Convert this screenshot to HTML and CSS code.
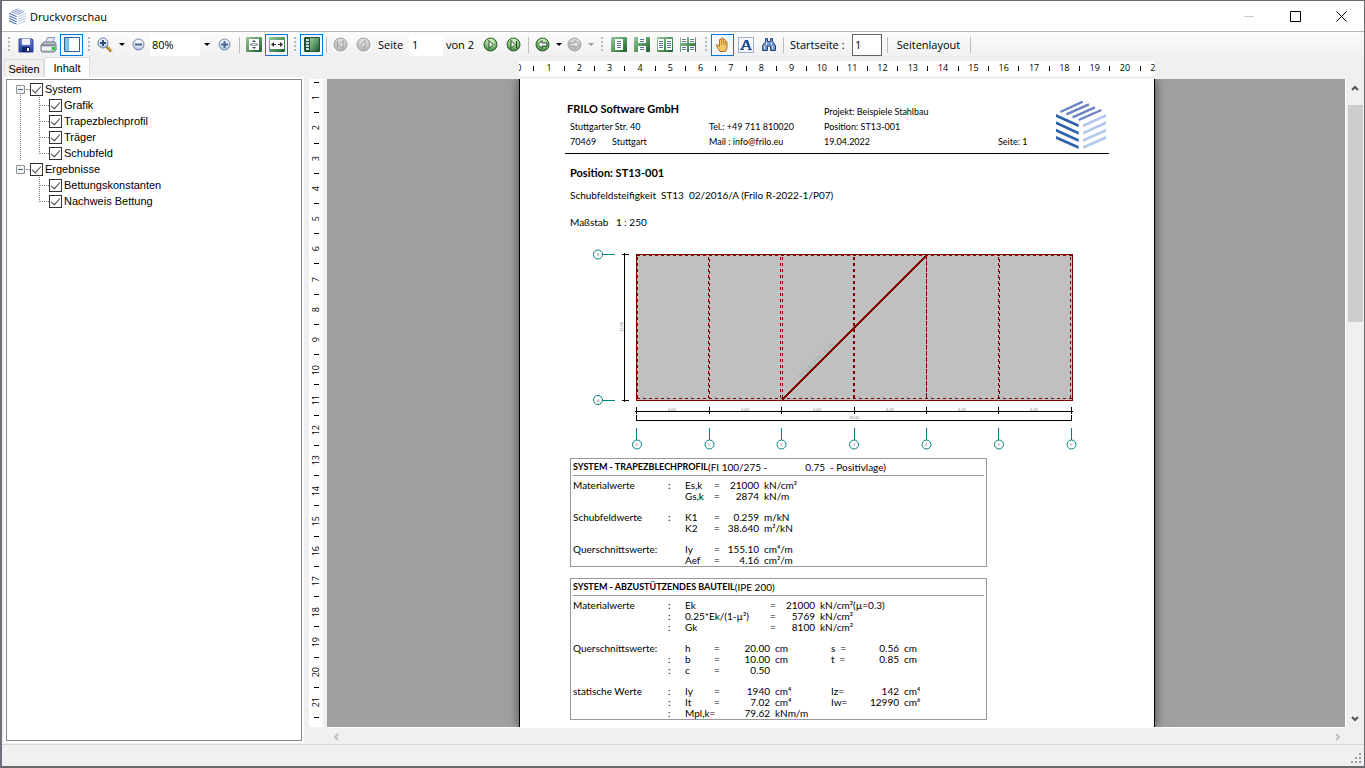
FILE: index.html
```html
<!DOCTYPE html>
<html lang="de">
<head>
  <meta charset="utf-8">
  <title>Druckvorschau</title>
  <link rel="stylesheet" href="styles.css">
</head>
<body>
  <!-- Shared gradients and symbols -->
  <svg class="defs" width="0" height="0" aria-hidden="true">
    <defs>
      <linearGradient id="green" x1="0" y1="0" x2="1" y2="1">
        <stop offset="0" stop-color="#9cc79a"/><stop offset="0.5" stop-color="#5a9a62"/><stop offset="1" stop-color="#1f5a30"/>
      </linearGradient>
      <radialGradient id="greenBall" cx="0.5" cy="0.25" r="0.8">
        <stop offset="0" stop-color="#e4f5d8"/><stop offset="0.5" stop-color="#8cc97c"/><stop offset="1" stop-color="#2f7a3a"/>
      </radialGradient>
      <radialGradient id="greyBall" cx="0.5" cy="0.25" r="0.8">
        <stop offset="0" stop-color="#e6e6e6"/><stop offset="1" stop-color="#b0b0b0"/>
      </radialGradient>
      <radialGradient id="blueBall" cx="0.5" cy="0.3" r="0.8">
        <stop offset="0" stop-color="#ffffff"/><stop offset="0.6" stop-color="#cfdcec"/><stop offset="1" stop-color="#7f9cc0"/>
      </radialGradient>
      <linearGradient id="blueFill" x1="0" y1="0" x2="0" y2="1">
        <stop offset="0" stop-color="#6f86dd"/><stop offset="1" stop-color="#22389c"/>
      </linearGradient>
      <symbol id="cube" viewBox="0 0 150 144">
        <g stroke="#6a82c4" stroke-width="7"><path d="M13 33 80 2M31 40l68-30M50 49l67-30M68 57l68-30"/></g>
        <path fill="#2e62ac" d="M0 39l68 31v9L0 48zM0 61l68 31v9L0 70zM0 83l68 31v9L0 92zM0 105l68 30v9L0 114z"/>
        <path fill="#b2c8ec" d="M81 70l69-31v9L81 79zM81 92l69-31v9l-69 31zM81 114l69-31v9l-69 31zM81 135l69-30v9l-69 30z"/>
      </symbol>
    </defs>
  </svg>

  <div class="window">
    <header class="titlebar">
      <svg class="app-icon" viewBox="0 0 150 144"><use href="#cube"/></svg>
      <h1>Druckvorschau</h1>
      <div class="window-buttons">
        <button aria-label="Minimieren"><svg width="11" height="11"><path d="M0 5.500h10" stroke="#c8c8c8"/></svg></button>
        <button aria-label="Maximieren"><svg width="11" height="11"><path d="M.5.5h10v10H.5z" fill="none" stroke="#000"/></svg></button>
        <button aria-label="Schließen"><svg width="11" height="11"><path d="M.5.5l10 10M10.500.5l-10 10" stroke="#000"/></svg></button>
      </div>
    </header>

    <!-- Toolbar -->
    <nav class="toolbar">
      <span class="grip"></span>
      <button class="tool" aria-label="Speichern"><svg width="16" height="16"><path d="M1 2h13l1 1v12H1z" fill="url(#blueFill)" stroke="#33439c"/><path d="M4 2h8v6H4z" fill="#eef1fb"/><path d="M4 10h8v5H4z" fill="#16235e"/><path d="M9 11h2v3H9z" fill="#fff"/></svg></button>
      <button class="tool" aria-label="Drucken"><svg width="17" height="16"><path d="M5.500 6l2-5.500h7L13 6z" fill="#dfe8f7" stroke="#7f93ad"/><path d="M1 8l3-3h11l1 2v6l-2 2H2l-1-1z" fill="#c3c9d1" stroke="#6e7681"/><path d="M2 8h13" stroke="#4e545c"/><path d="M2 10h9v3H2z" fill="#f2f4f6"/><path d="M12 10h3v3h-3z" fill="#18d630"/></svg></button>
      <button class="tool on" aria-label="Navigationsbereich"><svg width="16" height="15"><path d="M.5.5h15v14H.5z" fill="#fff" stroke="#315f8e"/><path d="M1 1h4v13H1z" fill="#7cc0e6"/><path d="M5.500 1v13" stroke="#e9f4fb"/></svg></button>
      <span class="grip narrow"></span>
      <button class="tool" aria-label="Zoom"><svg width="16" height="16"><path d="M9.500 9.500l5 5" stroke="#a97924" stroke-width="3"/><path d="M10 9l5 5" stroke="#f0c66b"/><circle cx="6" cy="6" r="5" fill="url(#blueBall)" stroke="#6b83ab"/><path d="M3 6h6M6 3v6" stroke="#2c4c83" stroke-width="2"/></svg></button>
      <button class="arrow" aria-label="Zoomstufen"><svg width="6" height="3"><path d="M0 0h6L3 3z"/></svg></button>
      <button class="tool" aria-label="Verkleinern"><svg width="13" height="13"><circle cx="6.500" cy="6.500" r="5.500" fill="url(#blueBall)" stroke="#7489aa"/><path d="M3 6.500h7" stroke="#4a6596" stroke-width="2"/></svg></button>
      <select class="zoom" aria-label="Zoomfaktor"><option>80%</option></select>
      <button class="arrow" aria-label="Auswahl öffnen"><svg width="6" height="3"><path d="M0 0h6L3 3z"/></svg></button>
      <button class="tool" aria-label="Vergrößern"><svg width="13" height="13"><circle cx="6.500" cy="6.500" r="5.500" fill="url(#blueBall)" stroke="#7489aa"/><path d="M3 6.500h7M6.500 3v7" stroke="#4a6596" stroke-width="2"/></svg></button>
      <span class="sep"></span>
      <button class="tool" aria-label="Ganze Seite"><svg width="16" height="16"><rect width="16" height="15" rx="1" fill="url(#green)"/><path d="M3 2h10v11H3z" fill="#fff"/><path d="M6 5L8 3l2 2zM6 10l2 2 2-2zM5.500 6v3L4 7.500zM10.500 6v3L12 7.500z" fill="#3c4653"/><path d="M6 6.500h4v2H6z" fill="none" stroke="#98a3ae"/></svg></button>
      <button class="tool on" aria-label="Seitenbreite"><svg width="16" height="16"><rect width="16" height="15" rx="1" fill="url(#green)"/><path d="M1 3h14v9H1z" fill="#fff"/><path d="M2 7.500L5 5v2h2v1H5v2zM14 7.500L11 5v2H9v1h2v2z" fill="#27313b"/></svg></button>
      <span class="grip"></span>
      <button class="tool on" aria-label="Miniaturen"><svg width="16" height="16"><rect width="16" height="15" rx="1" fill="#244f32"/><path d="M6 1h9v13H6z" fill="url(#green)"/><path d="M2 2h3v2H2zM2 5h3v2H2zM2 8h3v2H2zM2 11h3v2H2z" fill="#c9dcea"/></svg></button>
      <span class="sep"></span>
      <button class="tool" aria-label="Erste Seite" disabled><svg width="15" height="15"><circle cx="7.500" cy="7.500" r="6.500" fill="url(#greyBall)" stroke="#a4a4a4"/><path d="M4.500 4v7M10 3.500v8l-4-4z" fill="#e8e8e8" stroke="#989898"/></svg></button>
      <button class="tool" aria-label="Vorige Seite" disabled><svg width="15" height="15"><circle cx="7.500" cy="7.500" r="6.500" fill="url(#greyBall)" stroke="#a4a4a4"/><path d="M9 3.500v8l-4-4z" fill="#e8e8e8" stroke="#989898"/></svg></button>
      <label class="caption" for="page">Seite</label>
      <input class="page-input" id="page" type="text" value="1">
      <span class="caption total">von 2</span>
      <button class="tool" aria-label="Nächste Seite"><svg width="15" height="15"><circle cx="7.500" cy="7.500" r="6.500" fill="url(#greenBall)" stroke="#2c5b2f"/><path d="M6 3.500v8l4-4z" fill="#fff" stroke="#1d4522"/></svg></button>
      <button class="tool" aria-label="Letzte Seite"><svg width="15" height="15"><circle cx="7.500" cy="7.500" r="6.500" fill="url(#greenBall)" stroke="#2c5b2f"/><path d="M10.500 4v7M5 3.500v8l4-4z" fill="#fff" stroke="#1d4522"/></svg></button>
      <span class="sep"></span>
      <button class="tool" aria-label="Zurück"><svg width="15" height="15"><circle cx="7.500" cy="7.500" r="6.500" fill="url(#greenBall)" stroke="#2c5b2f"/><path d="M3 7.500l4-4V6h5v3H7v2.500z" fill="#fff" stroke="#1d4522"/></svg></button>
      <button class="arrow small" aria-label="Verlauf zurück"><svg width="6" height="3"><path d="M0 0h6L3 3z"/></svg></button>
      <button class="tool" aria-label="Vorwärts" disabled><svg width="15" height="15"><circle cx="7.500" cy="7.500" r="6.500" fill="url(#greyBall)" stroke="#a4a4a4"/><path d="M12 7.500l-4-4V6H3v3h5v2.500z" fill="#e8e8e8" stroke="#989898"/></svg></button>
      <button class="arrow small" aria-label="Verlauf vorwärts" disabled><svg width="6" height="3"><path d="M0 0h6L3 3z" fill="#999"/></svg></button>
      <span class="grip"></span>
      <button class="tool" aria-label="Einzelseite"><svg width="16" height="16"><rect width="16" height="15" rx="1" fill="url(#green)"/><path d="M4 2h8v11H4z" fill="#fff"/><path d="M6 4.500h4M6 6.500h4M6 8.500h4M6 10.500h4" stroke="#5a73a5"/></svg></button>
      <button class="tool" aria-label="Fortlaufend"><svg width="16" height="16"><rect width="16" height="15" rx="1" fill="url(#green)"/><path d="M4 0h8v6H4zM4 9h8v6H4z" fill="#fff"/><path d="M6 2.500h4M6 4.500h4M6 10.500h4M6 12.500h4" stroke="#5a73a5"/></svg></button>
      <button class="tool" aria-label="Doppelseite"><svg width="16" height="16"><rect width="16" height="15" rx="1" fill="url(#green)"/><path d="M1 2h6v11H1zM9 2h6v11H9z" fill="#fff"/><path d="M2 4.500h4M2 6.500h4M2 8.500h4M2 10.500h4M10 4.500h4M10 6.500h4M10 8.500h4M10 10.500h4" stroke="#5a73a5"/></svg></button>
      <button class="tool" aria-label="Doppelseite fortlaufend"><svg width="16" height="16"><rect width="16" height="15" rx="1" fill="url(#green)"/><path d="M1 0h6v6H1zM9 0h6v6H9zM1 9h6v6H1zM9 9h6v6H9z" fill="#fff"/><path d="M2 2.500h4M2 4.500h4M10 2.500h4M10 4.500h4M2 10.500h4M2 12.500h4M10 10.500h4M10 12.500h4" stroke="#5a73a5"/></svg></button>
      <span class="grip"></span>
      <button class="tool on" aria-label="Hand"><svg width="15" height="16"><path d="M5 14.500L1.500 9c-.8-1.500.8-2 1.500-1l1.500 1.500V3c0-1.200 1.500-1.200 1.700 0L6.500 2c0-1.400 1.800-1.400 2 0v1c.2-1 1.800-.8 1.800.3V5c.3-.9 1.700-.8 1.700.4V11l-1.500 3.500z" fill="#f6c768" stroke="#a8702a"/><path d="M6.500 3v5M8.500 3v5M10.500 4v4" stroke="#c68d3b"/></svg></button>
      <button class="tool" aria-label="Textauswahl"><svg width="16" height="16"><path d="M.5.5h15v15H.5z" fill="none" stroke="#4d6b9c" stroke-dasharray="1 1"/><path d="M7 3h3l3 9h1v1h-4v-1h1l-1-2H6l-1 2h1v1H2v-1h1zM7.500 5L6.500 9h3z" fill="#1f4c96"/></svg></button>
      <button class="tool" aria-label="Suchen"><svg width="16" height="15"><path d="M4.500 1.500h2v3h3v-3h2v3l3 4v5h-5V9h-3v4.500h-5v-5l3-4z" fill="#6f95d3" stroke="#22457f"/><path d="M3.500 9v3M11.500 9v3M5.500 5v3M10.500 5v3" stroke="#d3e2f8"/></svg></button>
      <span class="sep"></span>
      <label class="caption start" for="startPage">Startseite :</label>
      <input class="start-input" id="startPage" type="text" value="1">
      <span class="sep"></span>
      <button class="text-button">Seitenlayout</button>
      <span class="sep"></span>
    </nav>

    <main class="workspace">
      <!-- Sidebar with outline tree -->
      <aside class="sidebar">
        <div class="tabs">
          <button class="tab">Seiten</button>
          <button class="tab active">Inhalt</button>
        </div>
        <ul class="tree">
          <li class="branch">
            <div class="node"><button class="expander" aria-label="Zuklappen"></button><input type="checkbox" id="n1" checked><label for="n1">System</label></div>
            <ul>
              <li class="node"><input type="checkbox" id="n2" checked><label for="n2">Grafik</label></li>
              <li class="node"><input type="checkbox" id="n3" checked><label for="n3">Trapezblechprofil</label></li>
              <li class="node"><input type="checkbox" id="n4" checked><label for="n4">Träger</label></li>
              <li class="node"><input type="checkbox" id="n5" checked><label for="n5">Schubfeld</label></li>
            </ul>
          </li>
          <li class="branch">
            <div class="node"><button class="expander" aria-label="Zuklappen"></button><input type="checkbox" id="n6" checked><label for="n6">Ergebnisse</label></div>
            <ul>
              <li class="node"><input type="checkbox" id="n7" checked><label for="n7">Bettungskonstanten</label></li>
              <li class="node"><input type="checkbox" id="n8" checked><label for="n8">Nachweis Bettung</label></li>
            </ul>
          </li>
        </ul>
      </aside>

      <section class="viewer">
        <div class="ruler-x">
          <ol>
            <li>0</li><li>1</li><li>2</li><li>3</li><li>4</li><li>5</li><li>6</li><li>7</li><li>8</li><li>9</li><li>10</li>
            <li>11</li><li>12</li><li>13</li><li>14</li><li>15</li><li>16</li><li>17</li><li>18</li><li>19</li><li>20</li><li>21</li>
          </ol>
        </div>
        <div class="ruler-y">
          <ol>
            <li><span>1</span></li><li><span>2</span></li><li><span>3</span></li><li><span>4</span></li><li><span>5</span></li><li><span>6</span></li><li><span>7</span></li>
            <li><span>8</span></li><li><span>9</span></li><li><span>10</span></li><li><span>11</span></li><li><span>12</span></li><li><span>13</span></li><li><span>14</span></li>
            <li><span>15</span></li><li><span>16</span></li><li><span>17</span></li><li><span>18</span></li><li><span>19</span></li><li><span>20</span></li><li><span>21</span></li><li></li>
          </ol>
        </div>

        <div class="canvas">
          <article class="sheet">
            <header class="letterhead">
              <div class="company">
                <h2>FRILO Software GmbH</h2>
                <p>Stuttgarter Str. 40</p>
                <p><span class="zip">70469</span>Stuttgart</p>
              </div>
              <div>
                <p>Tel.: +49 711 810020</p>
                <p>Mail : info@frilo.eu</p>
              </div>
              <div>
                <p>Projekt: Beispiele Stahlbau</p>
                <p>Position: ST13-001</p>
                <p>19.04.2022</p>
              </div>
              <div>
                <p>Seite: 1</p>
              </div>
              <svg class="logo" viewBox="0 0 150 144"><use href="#cube"/></svg>
            </header>

            <div class="intro">
              <h2>Position: ST13-001</h2>
              <p>Schubfeldsteifigkeit&ensp;ST13&ensp;02/2016/A (Frilo R-2022-1/P07)</p>
              <p>Maßstab&ensp; 1 : 250</p>
            </div>

            <!-- Plan view of the shear field -->
            <svg class="plan" width="490" height="208" viewBox="590 246 490 208" shape-rendering="crispEdges" fill="none">
              <path d="M636 254h436v146H636z" fill="#c0c0c0"/>
              <g stroke="#800000">
                <path d="M636.500 254.500h435.500v146H636.500z"/>
                <path stroke-dasharray="3 3" d="M637 255.500h435M637 398.500h435M637.500 257v142M708.500 257v142M709.500 259v140M780.500 257v142M782.500 257v142M998.500 257v142M999.500 259v140M1070.500 257v142"/>
                <path stroke-dasharray="3 3" stroke-width="2" d="M854 257v142"/>
                <path stroke-dasharray="5 1" d="M926.500 255v144"/>
                <path stroke-width="2" d="M782 400l145-145"/>
              </g>
              <g stroke="#000">
                <path d="M624.500 253v149M622 254.500h7M622 400.500h7"/>
                <path d="M635 411.500h438M636.500 407v7M709.500 407v7M781.500 407v7M854.500 407v7M926.500 407v7M998.500 407v7M1071.500 407v7"/>
                <path d="M636 420.500h436M636.500 415v6M1071.500 415v6"/>
              </g>
              <g stroke="#008080" shape-rendering="auto">
                <path d="M602 254.500h13M602 400.500h13M636.500 428v12M709.500 428v12M781.500 428v12M854.500 428v12M926.500 428v12M998.500 428v12M1071.500 428v12"/>
                <circle cx="598" cy="254.500" r="4.500"/><circle cx="598" cy="400" r="4.500"/>
                <circle cx="637" cy="444.500" r="4.500"/><circle cx="709.500" cy="444.500" r="4.500"/><circle cx="781.500" cy="444.500" r="4.500"/><circle cx="854" cy="444.500" r="4.500"/>
                <circle cx="926.500" cy="444.500" r="4.500"/><circle cx="999" cy="444.500" r="4.500"/><circle cx="1071.500" cy="444.500" r="4.500"/>
              </g>
              <g class="plan-text">
                <text x="672" y="411">6.00</text><text x="745" y="411">6.00</text><text x="817" y="411">6.00</text><text x="890" y="411">6.00</text><text x="962" y="411">6.00</text><text x="1034" y="411">6.00</text>
                <text x="854" y="419">36.00</text>
                <text transform="translate(623 327) rotate(-90)">12.00</text>
                <text class="profile" transform="translate(818 362) rotate(-45)">FI 100/275 - 0.75</text>
                <text x="598" y="256">B</text><text x="598" y="402">A</text>
                <text x="637" y="446">0</text><text x="709" y="446">1</text><text x="781" y="446">2</text><text x="854" y="446">3</text><text x="926" y="446">4</text><text x="999" y="446">5</text><text x="1071" y="446">6</text>
              </g>
            </svg>

            <section class="block">
              <h3>SYSTEM - TRAPEZBLECHPROFIL<span>(FI 100/275 -</span><span class="thickness">0.75&ensp;- Positivlage)</span></h3>
              <table class="values">
                <colgroup><col class="c-name"><col class="c-colon"><col class="c-sym"><col class="c-eq"><col class="c-num"><col></colgroup>
                <tbody>
                  <tr><td>Materialwerte</td><td>:</td><td>Es,k</td><td>=</td><td class="num">21000</td><td>kN/cm²</td></tr>
                  <tr><td></td><td></td><td>Gs,k</td><td>=</td><td class="num">2874</td><td>kN/m</td></tr>
                </tbody>
                <tbody>
                  <tr><td>Schubfeldwerte</td><td>:</td><td>K1</td><td>=</td><td class="num">0.259</td><td>m/kN</td></tr>
                  <tr><td></td><td></td><td>K2</td><td>=</td><td class="num">38.640</td><td>m²/kN</td></tr>
                </tbody>
                <tbody>
                  <tr><td colspan="2">Querschnittswerte:</td><td>Iy</td><td>=</td><td class="num">155.10</td><td>cm⁴/m</td></tr>
                  <tr><td></td><td></td><td>Aef</td><td>=</td><td class="num">4.16</td><td>cm²/m</td></tr>
                </tbody>
              </table>
            </section>

            <section class="block">
              <h3>SYSTEM - ABZUSTÜTZENDES BAUTEIL<span>(IPE 200)</span></h3>
              <table class="values">
                <colgroup><col class="c-name"><col class="c-colon"><col class="c-formula"><col class="c-eq"><col class="c-num"><col></colgroup>
                <tbody>
                  <tr><td>Materialwerte</td><td>:</td><td>Ek</td><td>=</td><td class="num">21000</td><td>kN/cm²(µ=0.3)</td></tr>
                  <tr><td></td><td>:</td><td>0.25*Ek/(1-µ²)</td><td>=</td><td class="num">5769</td><td>kN/cm²</td></tr>
                  <tr><td></td><td>:</td><td>Gk</td><td>=</td><td class="num">8100</td><td>kN/cm²</td></tr>
                </tbody>
              </table>
              <table class="values">
                <colgroup><col class="c-name"><col class="c-colon"><col class="c-sym"><col class="c-eq"><col class="c-wide"><col class="c-unit"><col class="c-sym"><col class="c-last"><col></colgroup>
                <tbody>
                  <tr><td colspan="2">Querschnittswerte:</td><td>h</td><td>=</td><td class="num">20.00</td><td>cm</td><td>s&ensp;=</td><td class="num">0.56</td><td>cm</td></tr>
                  <tr><td></td><td>:</td><td>b</td><td>=</td><td class="num">10.00</td><td>cm</td><td>t&ensp;=</td><td class="num">0.85</td><td>cm</td></tr>
                  <tr><td></td><td>:</td><td>c</td><td>=</td><td class="num">0.50</td></tr>
                </tbody>
                <tbody>
                  <tr><td>statische Werte</td><td>:</td><td>Iy</td><td>=</td><td class="num">1940</td><td>cm⁴</td><td>Iz=</td><td class="num">142</td><td>cm⁴</td></tr>
                  <tr><td></td><td>:</td><td>It</td><td>=</td><td class="num">7.02</td><td>cm⁴</td><td>Iw=</td><td class="num">12990</td><td>cm⁶</td></tr>
                  <tr><td></td><td>:</td><td colspan="2">Mpl,k=</td><td class="num">79.62</td><td>kNm/m</td></tr>
                </tbody>
              </table>
            </section>
          </article>
        </div>

        <div class="scroll-y">
          <button aria-label="Nach oben"><svg width="8" height="6"><path d="M1 5l3-3 3 3" fill="none" stroke="#555" stroke-width="2"/></svg></button>
          <div class="thumb"></div>
          <button aria-label="Nach unten"><svg width="8" height="6"><path d="M1 1l3 3 3-3" fill="none" stroke="#555" stroke-width="2"/></svg></button>
        </div>
        <div class="scroll-x">
          <button aria-label="Nach links"><svg width="6" height="8"><path d="M5 1L2 4l3 3" fill="none" stroke="#bfbfbf" stroke-width="2"/></svg></button>
          <button aria-label="Nach rechts"><svg width="6" height="8"><path d="M1 1l3 3-3 3" fill="none" stroke="#bfbfbf" stroke-width="2"/></svg></button>
        </div>
      </section>
    </main>

    <footer class="statusbar">
      <svg width="10" height="10" fill="#9a9a9a"><path d="M8 0h2v2H8zM8 4h2v2H8zM8 8h2v2H8zM4 4h2v2H4zM4 8h2v2H4zM0 8h2v2H0z"/></svg>
    </footer>
  </div>
</body>
</html>
```
FILE: styles.css
```css
* {
  box-sizing: border-box;
}

body {
  margin: 0;
  font-family: "Open Sans", "Noto Sans", sans-serif;
  font-size: 11px;
  color: #000;
}

h1, h2, h3, p, ul, ol {
  margin: 0;
  padding: 0;
  list-style: none;
}

button {
  padding: 0;
  border: none;
  background: none;
  font: inherit;
  color: inherit;
}

svg {
  display: block;
}

.defs {
  position: absolute;
}

.window {
  display: flex;
  flex-direction: column;
  height: 100vh;
  overflow: hidden;
  border: 1px solid #6b696e;
  border-left: 2px solid #6c7078;
  border-bottom-width: 2px;
  background-color: #f0f0f0;
}

/* Title bar */
.titlebar {
  display: flex;
  align-items: center;
  flex: none;
  height: 31px;
  padding-left: 7px;
  background-color: #fff;
  border-bottom: 1px solid #b4b8b4;
}

.titlebar h1 {
  flex: 1;
  margin-left: 4px;
  font-size: 11px;
  font-weight: normal;
}

.app-icon {
  width: 17px;
  height: 17px;
}

.window-buttons {
  display: flex;
}

.window-buttons button {
  display: flex;
  align-items: center;
  justify-content: center;
  width: 46px;
  height: 29px;
}

/* Toolbar */
.toolbar {
  display: flex;
  align-items: center;
  flex: none;
  height: 25px;
  background: linear-gradient(#fcfcfc, #f0f0f0);
}

.grip {
  flex: none;
  width: 12px;
  height: 16px;
  background: repeating-linear-gradient(#b9b9b9 0 2px, transparent 2px 4px) 6px 0 / 2px 100% no-repeat;
}

.grip.narrow {
  width: 10px;
  background-position-x: 5px;
}

.tool {
  display: flex;
  align-items: center;
  justify-content: center;
  flex: none;
  width: 23px;
  height: 22px;
}

.tool.on {
  border: 1px solid #0078d7;
  background-color: #f4f8fc;
}

.arrow {
  display: flex;
  align-items: center;
  justify-content: center;
  width: 11px;
  height: 22px;
}

.arrow.small {
  width: 9px;
}

.sep {
  width: 6px;
  height: 16px;
  background: linear-gradient(#bdbdbd, #bdbdbd) 3px 0 / 1px 100% no-repeat;
}

.zoom {
  appearance: none;
  width: 50px;
  height: 22px;
  padding: 0 2px;
  border: none;
  background-color: #fff;
  font: inherit;
  color: inherit;
}

.zoom + .arrow {
  width: 13px;
}

.caption {
  width: 34px;
  padding-left: 3px;
  white-space: nowrap;
}

.caption.total {
  width: 36px;
}

.caption.start {
  width: 66px;
  padding-left: 4px;
}

.page-input,
.start-input {
  height: 22px;
  padding: 0 3px;
  border: none;
  background-color: #fff;
  font: inherit;
  color: inherit;
}

.page-input {
  width: 34px;
}

.start-input {
  width: 30px;
  padding: 0 2px;
  margin-right: 2px;
  border: 1px solid #646464;
}

.text-button {
  width: 77px;
  height: 22px;
}

/* Sidebar */
.workspace {
  display: flex;
  flex: 1;
  min-height: 0;
  border-bottom: 1px solid #d7d7d7;
}

.sidebar {
  display: flex;
  flex-direction: column;
  flex: none;
  width: 301px;
  padding: 0 0 3px 1px;
  font-family: "Liberation Sans", Arial, sans-serif;
}

.tabs {
  display: flex;
  align-items: flex-end;
  height: 21px;
  padding-left: 1px;
}

.tab {
  width: 40px;
  height: 19px;
  border: 1px solid #dcdcdc;
  border-bottom: none;
}

.tab.active {
  width: 46px;
  height: 21px;
  background-color: #fff;
}

.tree {
  flex: 1;
  margin: 1px 1px 0 3px;
  padding: 1px 8px;
  border: 1px solid #828790;
  outline: 2px solid #fff;
  background-color: #fff;
}

.node {
  display: flex;
  align-items: center;
  height: 16px;
}

.node label {
  margin-left: 2px;
  white-space: nowrap;
}

.expander {
  width: 9px;
  height: 9px;
  margin: 0 1px;
  border: 1px solid #919191;
  border-radius: 1px;
  background: linear-gradient(#4b63a7, #4b63a7) center / 5px 1px no-repeat #f4f4f4;
}

.branch > .node::before {
  content: "";
  order: 1;
  width: 4px;
  border-top: 1px dotted #808080;
}

.branch > .node input,
.branch > .node label {
  order: 2;
}

.branch ul {
  padding-left: 24px;
  background: repeating-linear-gradient(#808080 0 1px, transparent 1px 2px) 24px 0 / 1px calc(100% - 8px) no-repeat;
}

.branch:first-child {
  background: repeating-linear-gradient(#808080 0 1px, transparent 1px 2px) 5px 12px / 1px 100% no-repeat;
}

.branch ul .node::before {
  content: "";
  width: 10px;
  border-top: 1px dotted #808080;
}

.tree input {
  appearance: none;
  display: flex;
  justify-content: center;
  flex: none;
  width: 13px;
  height: 13px;
  margin: 0;
  border: 1px solid #333;
  background-color: #fff;
}

.tree input:checked::after {
  content: "";
  width: 4px;
  height: 8px;
  border: solid #444;
  border-width: 0 1px 1px 0;
  transform: rotate(42deg);
}

/* Rulers */
.viewer {
  display: grid;
  grid-template-columns: 14px 1fr 18px;
  grid-template-rows: 19px 1fr 17px;
  column-gap: 4px;
  flex: 1;
  min-width: 0;
  padding: 3px 0 0 6px;
}

.ruler-x {
  grid-area: 1 / 2;
  justify-self: center;
  width: 636px;
  height: 15px;
  margin: 1px -5px 0 0;
  overflow: hidden;
  background-color: #fff;
}

.ruler-x ol {
  display: flex;
  margin: 0 -8px 0 -23px;
  font-size: 9px;
  line-height: 14px;
}

.ruler-x li {
  display: grid;
  grid-template-columns: 1fr 1fr;
  align-items: center;
  flex: 1 1 0;
  text-align: center;
}

.ruler-x li::before {
  content: "";
  justify-self: center;
  width: 1px;
  height: 5px;
  background-color: #000;
}

.ruler-y {
  grid-area: 2 / 1;
  display: flex;
  overflow: hidden;
  background-color: #fff;
}

.ruler-y ol {
  display: flex;
  flex-direction: column;
  flex: 1;
  margin: -4px 0 -13px;
  font-size: 9px;
  line-height: 14px;
}

.ruler-y li {
  display: grid;
  grid-template-rows: 1fr 1fr;
  place-items: center;
  flex: 1 1 0;
}

.ruler-y li::before {
  content: "";
  width: 5px;
  height: 1px;
  background-color: #000;
}

.ruler-y span {
  writing-mode: vertical-rl;
  transform: rotate(180deg);
}

/* Page canvas */
.canvas {
  grid-area: 2 / 2;
  display: flex;
  justify-content: center;
  overflow: hidden;
  min-height: 0;
  margin-right: -4px;
  padding-left: 2px;
  border-right: 1px solid #fff;
  background-color: #a0a0a0;
}

.sheet {
  flex: none;
  width: 636px;
  padding: 20px 45px 0;
  border: solid #000;
  border-width: 0 1px;
  background-color: #fff;
  box-shadow: 0 0 10px #444;
  font-family: Lato, Carlito, sans-serif;
  font-size: 10px;
  line-height: 15px;
}

.letterhead {
  display: grid;
  grid-template-columns: 144px 115px 174px 58px 1fr;
  align-items: end;
  padding-bottom: 4px;
  border-bottom: 1px solid #000;
  font-size: 9px;
}

.company {
  padding-left: 5px;
}

.company h2 {
  margin-left: -3px;
  white-space: nowrap;
}

.sheet h2 {
  font-size: 11px;
  line-height: 20px;
}

.zip {
  display: inline-block;
  width: 42px;
}

.logo {
  width: 50px;
  height: 48px;
}

.intro {
  padding: 9px 5px 0;
}

.intro p {
  margin-top: 5px;
  white-space: nowrap;
}

.intro p + p {
  margin-top: 12px;
}

.plan {
  margin: 16px 0 4px 25px;
}

.plan-text {
  font-size: 4px;
  fill: #888;
  text-anchor: middle;
}

.plan-text .profile {
  font-size: 6px;
  fill: #8fb0ae;
}

.block {
  width: 417px;
  margin: 0 0 11px 5px;
  padding: 0 2px;
  border: 1px solid #999;
}

.block h3 {
  display: flex;
  margin-bottom: 4px;
  border-bottom: 1px solid #999;
  font-size: 9px;
  line-height: 16px;
  white-space: nowrap;
}

.block h3 span {
  font-size: 10px;
  font-weight: normal;
}

.block h3 .thickness {
  margin-left: 38px;
}

/* Value tables */
.values {
  table-layout: fixed;
  width: 100%;
  border-collapse: collapse;
  line-height: 11px;
}

.values td {
  height: 11px;
  padding: 0;
  white-space: nowrap;
}

.values tbody::after {
  content: "";
  display: block;
  height: 10px;
}

.values:last-child tbody:last-child::after {
  height: 0;
}

.values .num {
  padding-right: 5px;
  text-align: right;
}

.c-name {
  width: 95px;
}

.c-colon {
  width: 17px;
}

.c-sym {
  width: 29px;
}

.c-eq {
  width: 12px;
}

.c-num {
  width: 38px;
}

.c-formula {
  width: 85px;
}

.c-wide {
  width: 49px;
}

.c-unit {
  width: 56px;
}

.c-last {
  width: 44px;
}

/* Scroll bars */
.scroll-y {
  grid-area: 2 / 3;
  display: flex;
  flex-direction: column;
  align-items: center;
}

.scroll-y button,
.scroll-x button {
  display: flex;
  align-items: center;
  justify-content: center;
  width: 17px;
  height: 17px;
}

.scroll-y .thumb {
  width: 15px;
  height: 217px;
  margin: 9px 0 auto;
  background-color: #cdcdcd;
}

.scroll-x {
  grid-area: 3 / 2;
  display: flex;
  justify-content: space-between;
  margin-right: -4px;
  border-top: 1px solid #fff;
}

/* Status bar */
.statusbar {
  display: flex;
  align-items: flex-end;
  justify-content: flex-end;
  flex: none;
  height: 21px;
  padding: 3px;
}
```
